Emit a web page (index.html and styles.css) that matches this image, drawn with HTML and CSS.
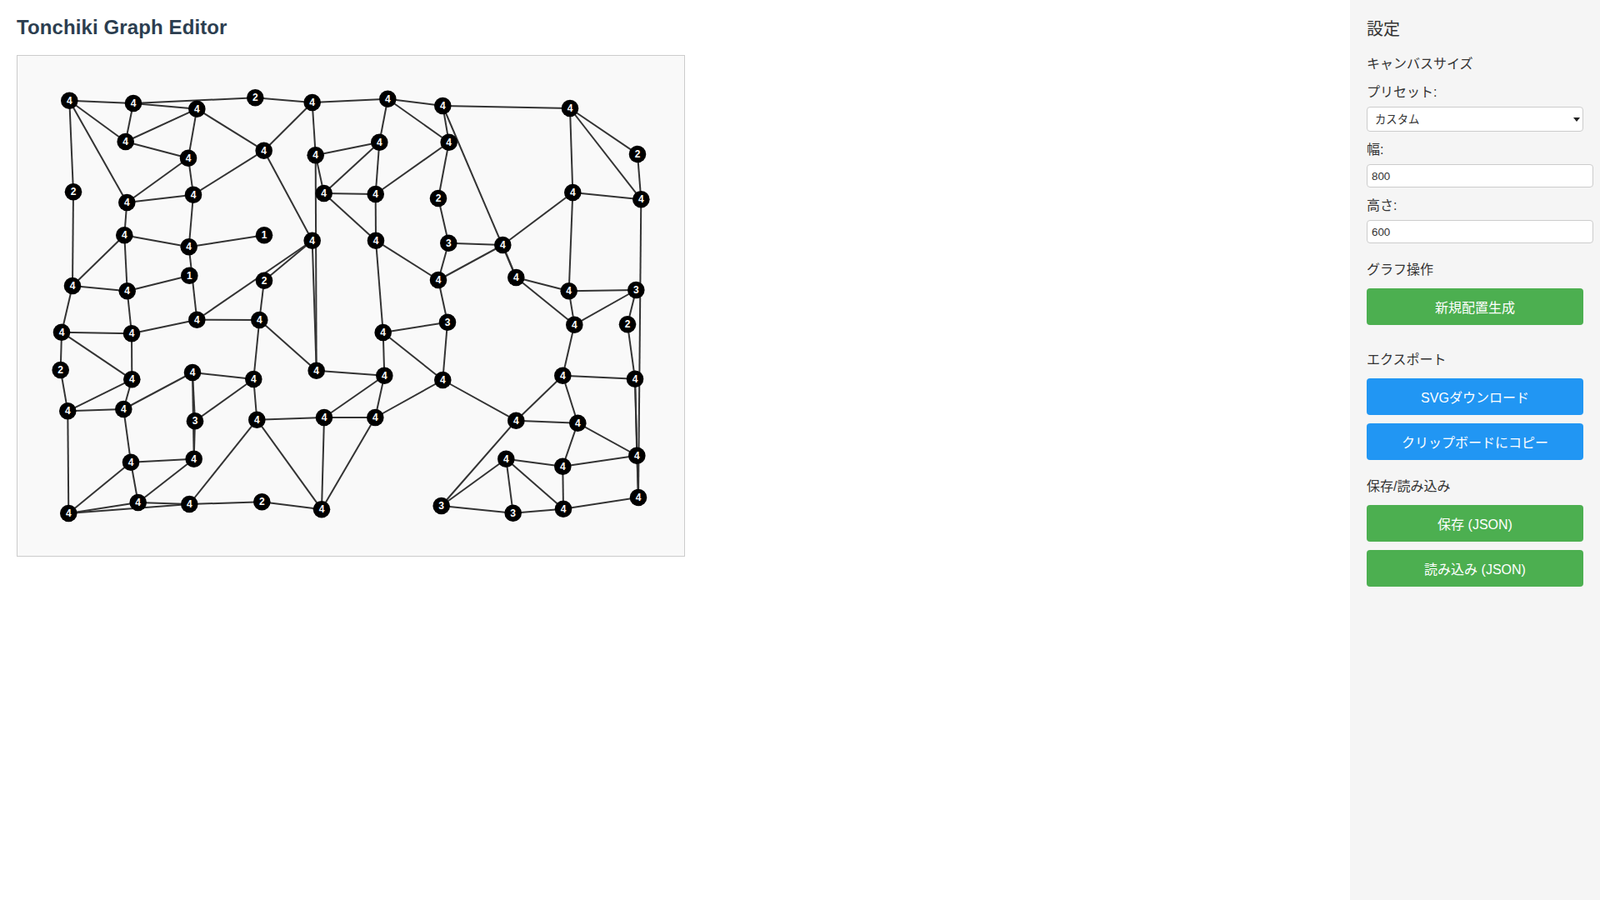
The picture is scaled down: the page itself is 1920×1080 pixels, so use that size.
FILE: index.html
```html
<!DOCTYPE html>
<html lang="ja">
<head>
    <meta charset="UTF-8">
    <title>Tonchiki Graph Editor</title>
    <link rel="stylesheet" href="styles.css">
</head>
<body>
    <div class="container">
        <main class="main-content">
            <h1>Tonchiki Graph Editor</h1>
            <div class="canvas-container">
                <svg id="graph" width="800" height="600" viewBox="0 0 800 600"></svg>
            </div>
        </main>

        <aside class="sidebar">
            <h3>設定</h3>

            <div class="section">
                <h4>キャンバスサイズ</h4>
                <label for="preset">プリセット:</label>
                <div class="select-wrap">
                    <select id="preset">
                        <option>カスタム</option>
                    </select>
                </div>
                <label for="width">幅:</label>
                <input id="width" type="text" value="800">
                <label for="height">高さ:</label>
                <input id="height" type="text" value="600">
            </div>

            <div class="section section-wide">
                <h4>グラフ操作</h4>
                <button class="btn">新規配置生成</button>
            </div>

            <div class="section">
                <h4>エクスポート</h4>
                <button class="btn btn-blue">SVGダウンロード</button>
                <button class="btn btn-blue">クリップボードにコピー</button>
            </div>

            <div class="section">
                <h4>保存/読み込み</h4>
                <button class="btn">保存 (JSON)</button>
                <button class="btn">読み込み (JSON)</button>
            </div>
        </aside>
    </div>

    <script src="script.js"></script>
</body>
</html>
```

FILE: styles.css
```css
body {
    margin: 0;
    font-family: "Liberation Sans", Arial, "Noto Sans CJK JP", sans-serif;
    color: #333;
    background: #fff;
}

.container {
    display: flex;
    min-height: 100vh;
}

.main-content {
    flex: 1;
    padding: 20px;
}

h1 {
    margin: 0 0 20px 0;
    font-size: 24px;
    line-height: 26px;
    letter-spacing: 0.11px;
    color: #2c3e50;
}

.canvas-container {
    width: 800px;
    height: 600px;
    border: 1px solid #ccc;
    background: #f9f9f9;
}

#graph {
    display: block;
}

#graph line {
    stroke: #333;
    stroke-width: 2;
}

#graph circle {
    fill: #000;
}

#graph text {
    fill: #fff;
    font-size: 12px;
    font-weight: bold;
    text-anchor: middle;
    dominant-baseline: central;
}

.sidebar {
    width: 260px;
    padding: 20px;
    background: #f5f5f5;
}

h3 {
    margin: 0 0 15px 0;
    font-size: 20px;
    line-height: 30px;
    font-weight: normal;
}

h4 {
    margin: 0 0 10px 0;
    font-size: 16px;
    line-height: 24px;
    font-weight: normal;
}

.section {
    margin-bottom: 20px;
}

.section-wide {
    margin-bottom: 30px;
}

label {
    display: block;
    margin-bottom: 5px;
    font-size: 16px;
    line-height: 24px;
}

.select-wrap {
    position: relative;
    margin-bottom: 10px;
}

/* same small filled arrow as the native control */
.select-wrap::after {
    content: "";
    position: absolute;
    top: 13px;
    right: 4px;
    border-left: 4.5px solid transparent;
    border-right: 4.5px solid transparent;
    border-top: 5px solid #222;
    pointer-events: none;
}

select {
    display: block;
    box-sizing: border-box;
    width: 100%;
    height: 30px;
    padding: 5px 9px;
    border: 1px solid #ccc;
    border-radius: 4px;
    background: #fff;
    color: #333;
    font-family: inherit;
    font-size: 13.333px;
    appearance: none;
}

input {
    display: block;
    width: 100%;
    height: 16px;
    margin-bottom: 10px;
    padding: 5px;
    border: 1px solid #ccc;
    border-radius: 4px;
    background: #fff;
    color: #333;
    font-family: inherit;
    font-size: 13.333px;
}

.btn {
    display: block;
    width: 100%;
    height: 44px;
    margin-bottom: 10px;
    border: none;
    border-radius: 4px;
    background: #4caf50;
    color: #fff;
    font-family: inherit;
    font-size: 16px;
}

.btn-blue {
    background: #2196f3;
}
```

FILE: script.js
```js
// node positions, in canvas coordinates
const nodes = {
    a1: [62.3, 53.7], a2: [139, 57], b: [215.3, 63.7], c2: [285.3, 50.3], d: [353.7, 56],
    e: [444.3, 51.7], f: [510.3, 60], g: [663, 63], h: [129.7, 103], k: [205, 122.7],
    l: [295.7, 113.7], m: [357.7, 119.3], V: [434.3, 103.7], X: [517.7, 103.7], CC: [744, 118],
    i: [67, 163.3], j: [131.3, 176], n: [211, 166.7], M: [367.7, 165], U: [429.7, 166],
    Y: [505, 171], BB: [666.3, 164], DD: [748.3, 172.3], o: [128.3, 215.3], p: [205.7, 229.3],
    q1: [296, 215.3], r: [353.7, 221.7], T: [430, 221.7], Z: [517.3, 224.7], AA: [582.3, 227],
    u: [206.3, 263.7], w2: [296, 269.7], s: [66, 276], t: [131.7, 282.3], S: [505, 269],
    FF: [598.3, 266], EE: [661.7, 282.3], HH: [742.3, 281], v: [215.3, 316.7], x: [290.3, 317],
    P: [438.7, 332], R: [516, 319.7], GG: [668.3, 322.7], II: [732, 322.3], y: [53, 331.7],
    z: [137, 333.3], A: [51.7, 377], B: [137.3, 388.3], E: [210, 380], F: [283.3, 388],
    J: [358.7, 377.7], K: [440.3, 383.7], Q: [510.3, 389], NN: [654.3, 383.7], KK: [741, 387.7],
    C: [60.3, 426.3], D: [127.3, 424], G: [213, 438.3], I: [287.3, 436.7], L: [368, 434],
    N: [429.3, 434], PP: [598.3, 437.7], OO: [672.3, 440.7], LL: [743.3, 479.7], WW: [136, 487.7],
    H: [211.7, 483.7], RR: [586.3, 483.7], QQ: [654.3, 492.7], VV: [61.3, 549], XX: [144.7, 536],
    YY: [206.3, 538], ZZ: [293.3, 535.3], a: [365, 544.3], SS: [508.7, 540], TT: [594.7, 548.7],
    UU: [655, 543.7], MM: [745, 530]
};

const edges = `a1-a2 a2-b a2-c2 a1-h a1-i a1-j a2-h h-b h-k b-k b-l l-d d-c2 d-e d-m e-f f-g e-V e-X f-X
    f-FF AA-FF k-j k-n j-n n-l j-o n-p o-p p-q1 l-r i-s o-s o-t t-u p-v r-w2 r-v w2-x v-x
    s-t s-y t-z y-z z-v y-A y-B z-B A-C C-B C-D B-D D-E E-F E-G G-H E-H G-F F-x F-I
    x-J m-J r-J m-M m-V M-V M-U M-T U-V U-X U-T T-S T-P S-Z S-AA S-R Z-AA Z-Y Y-X
    AA-BB BB-g g-CC g-DD CC-DD BB-DD BB-EE FF-EE FF-GG EE-HH EE-GG GG-HH HH-II II-KK DD-MM
    KK-LL KK-MM LL-MM UU-MM GG-NN NN-KK NN-OO NN-PP PP-OO OO-LL OO-QQ QQ-LL QQ-RR RR-SS PP-SS
    SS-TT RR-TT RR-UU TT-UU QQ-UU Q-PP P-R P-Q R-Q P-K K-N K-L L-N L-I L-a N-a N-Q J-K
    I-a I-YY YY-ZZ ZZ-a YY-XX YY-VV VV-XX VV-WW VV-C D-WW WW-H WW-XX H-XX`.trim().split(/\s+/);

const svg = document.getElementById('graph');
const degree = {};

function add(tag, attrs, text) {
    const el = document.createElementNS('http://www.w3.org/2000/svg', tag);
    for (const key in attrs) el.setAttribute(key, attrs[key]);
    if (text !== undefined) el.textContent = text;
    svg.appendChild(el);
}

edges.forEach(edge => {
    const [from, to] = edge.split('-');
    degree[from] = (degree[from] || 0) + 1;
    degree[to] = (degree[to] || 0) + 1;
    add('line', { x1: nodes[from][0], y1: nodes[from][1], x2: nodes[to][0], y2: nodes[to][1] });
});

// the number on a node is how many edges meet there
for (const id in nodes) {
    const [x, y] = nodes[id];
    add('circle', { cx: x, cy: y, r: 10.3 });
    add('text', { x: x, y: y }, degree[id]);
}
```
